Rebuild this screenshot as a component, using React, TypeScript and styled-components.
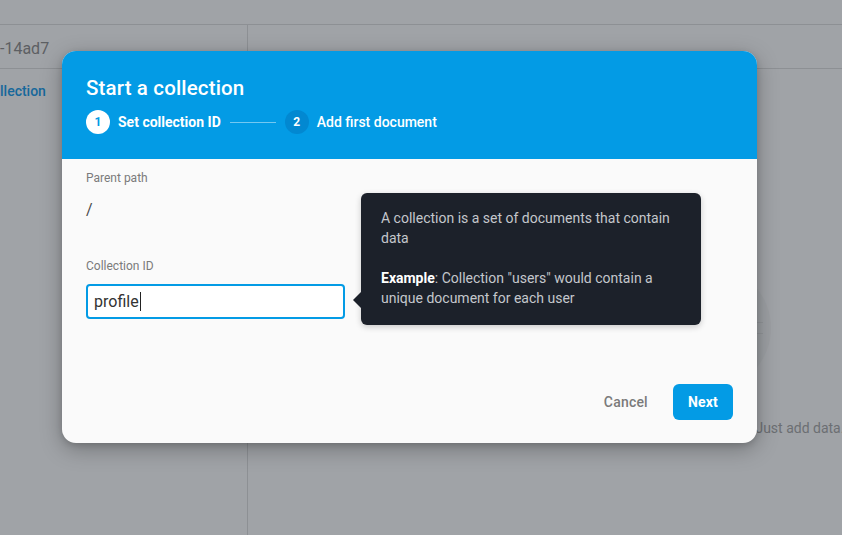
import React from "react";
import styled, { createGlobalStyle } from "styled-components";

const Global = createGlobalStyle`
  html, body { margin: 0; padding: 0; }
  body {
    width: 842px; height: 535px; overflow: hidden;
    font-family: Roboto, "Liberation Sans", Arial, sans-serif;
    background: #a0a3a7;
  }
  * { box-sizing: border-box; }
`;

const Page = styled.div`
  position: relative;
  width: 842px;
  height: 535px;
  overflow: hidden;
  background: #a0a3a7;
  display: grid;
  grid-template-rows: 25px 1fr;
`;

const TopBar = styled.div`
  border-bottom: 1px solid #8d9094;
`;

const Main = styled.div`
  display: grid;
  grid-template-columns: 248px 1fr;
`;

const Column = styled.div<{ $divider?: boolean }>`
  display: flex;
  flex-direction: column;
  border-right: ${(p) => (p.$divider ? "1px solid #8d9094" : "none")};
  min-width: 0;
  overflow: hidden;
`;

const ColHeader = styled.div`
  height: 44px;
  border-bottom: 1px solid #8d9094;
  display: flex;
  align-items: center;
  padding-top: 3px;
  font-size: 16px;
  color: #5d5f63;
  white-space: nowrap;
`;

const NavLink = styled.div`
  padding-top: 14px;
  font-size: 14px;
  font-weight: 500;
  color: #16689b;
  white-space: nowrap;
`;

const EmptyArea = styled.div`
  flex: 1;
  display: flex;
  padding-left: 310px;
  padding-top: 196px;
`;

const EmptyState = styled.div`
  flex: 0 0 300px;
  display: flex;
  flex-direction: column;
  align-items: center;
  gap: 29px;
`;

const Illustration = styled.div`
  width: 126px;
  height: 126px;
  border-radius: 50%;
  background: #9c9fa3;
  display: flex;
  flex-direction: column;
  justify-content: center;
  gap: 10px;
  padding: 0 8px;
`;

const IllLine = styled.div`
  height: 1px;
  background: #929599;
`;

const EmptyText = styled.div`
  font-size: 14px;
  color: #6c6f73;
  white-space: nowrap;
`;

const Modal = styled.div`
  position: absolute;
  left: 62px;
  top: 51px;
  width: 695px;
  height: 392px;
  border-radius: 14px;
  background: #fafafa;
  box-shadow: 0 6px 22px rgba(0, 0, 0, 0.28), 0 2px 6px rgba(0, 0, 0, 0.14);
  display: flex;
  flex-direction: column;
`;

const Header = styled.div`
  height: 108px;
  background: #039be5;
  border-radius: 14px 14px 0 0;
  padding: 23px 24px 0;
  display: flex;
  flex-direction: column;
  gap: 8px;
  color: #fff;
`;

const Title = styled.div`
  font-size: 20.5px;
  line-height: 28px;
  font-weight: 500;
  letter-spacing: 0.15px;
`;

const Steps = styled.div`
  display: flex;
  align-items: center;
`;

const StepDot = styled.div<{ $active?: boolean }>`
  width: 24px;
  height: 24px;
  border-radius: 50%;
  background: ${(p) => (p.$active ? "#ffffff" : "#0288d1")};
  color: ${(p) => (p.$active ? "#039be5" : "#ffffff")};
  font-size: 12px;
  font-weight: 700;
  display: flex;
  align-items: center;
  justify-content: center;
  margin-right: 8px;
`;

const StepLabel = styled.div<{ $active?: boolean }>`
  font-size: 14px;
  font-weight: ${(p) => (p.$active ? 700 : 500)};
  color: #fff;
`;

const StepLine = styled.div`
  width: 46px;
  height: 1px;
  background: rgba(255, 255, 255, 0.45);
  margin: 0 9px;
`;

const Body = styled.div`
  position: relative;
  flex: 1;
  display: flex;
  flex-direction: column;
  padding: 11px 24px 23px;
`;

const Label = styled.div<{ $gap?: number }>`
  font-size: 12px;
  line-height: 16px;
  color: #7b7b7b;
  margin-top: ${(p) => p.$gap ?? 0}px;
`;

const PathValue = styled.div`
  font-size: 16px;
  line-height: 24px;
  color: #4a4a4a;
  margin-top: 12px;
`;

const InputBox = styled.div`
  margin-top: 10px;
  width: 259px;
  height: 35px;
  border: 2px solid #039be5;
  border-radius: 4px;
  background: #fff;
  display: flex;
  align-items: center;
  padding: 0 6px;
  font-size: 16px;
  color: #333;
`;

const Caret = styled.span`
  display: inline-block;
  width: 1px;
  height: 19px;
  background: #222;
  margin-left: 1px;
`;

const Tooltip = styled.div`
  position: absolute;
  left: 299px;
  top: 34px;
  width: 340px;
  height: 132px;
  background: #1c212a;
  border-radius: 6px;
  padding: 15px 20px 17px;
  color: #c4c7cc;
  font-size: 14px;
  line-height: 20px;
  box-shadow: 0 2px 6px rgba(0, 0, 0, 0.2);
  &::before {
    content: "";
    position: absolute;
    left: -8px;
    top: 99px;
    border-top: 8px solid transparent;
    border-bottom: 8px solid transparent;
    border-right: 8px solid #1c212a;
  }
`;

const TipPara = styled.p`
  margin: 0 0 20px;
  &:last-child { margin-bottom: 0; }
`;

const Strong = styled.strong`
  color: #fff;
  font-weight: 700;
`;

const Footer = styled.div`
  margin-top: auto;
  display: flex;
  justify-content: flex-end;
  align-items: center;
  gap: 9px;
`;

const Button = styled.button<{ $primary?: boolean }>`
  height: 36px;
  border: none;
  border-radius: 6px;
  padding: 0 ${(p) => (p.$primary ? 15 : 16)}px;
  font-family: Roboto, "Liberation Sans", Arial, sans-serif;
  font-size: 14px;
  font-weight: ${(p) => (p.$primary ? 700 : 500)};
  background: ${(p) => (p.$primary ? "#039be5" : "transparent")};
  color: ${(p) => (p.$primary ? "#fff" : "#7a7a7a")};
  letter-spacing: 0.2px;
  cursor: pointer;
`;

export default function App() {
  return (
    <>
      <Global />
      <Page>
        <TopBar />
        <Main>
          <Column $divider>
            <ColHeader>-14ad7</ColHeader>
            <NavLink>llection</NavLink>
          </Column>
          <Column>
            <ColHeader />
            <EmptyArea>
              <EmptyState>
                <Illustration>
                  <IllLine />
                  <IllLine />
                </Illustration>
                <EmptyText>Your database is ready to go. Just add data.</EmptyText>
              </EmptyState>
            </EmptyArea>
          </Column>
        </Main>
        <Modal>
          <Header>
            <Title>Start a collection</Title>
            <Steps>
              <StepDot $active>1</StepDot>
              <StepLabel $active>Set collection ID</StepLabel>
              <StepLine />
              <StepDot>2</StepDot>
              <StepLabel>Add first document</StepLabel>
            </Steps>
          </Header>
          <Body>
            <Label>Parent path</Label>
            <PathValue>/</PathValue>
            <Label $gap={36}>Collection ID</Label>
            <InputBox>
              profile
              <Caret />
            </InputBox>
            <Tooltip>
              <TipPara>A collection is a set of documents that contain data</TipPara>
              <TipPara>
                <Strong>Example</Strong>: Collection "users" would contain a unique document for each user
              </TipPara>
            </Tooltip>
            <Footer>
              <Button>Cancel</Button>
              <Button $primary>Next</Button>
            </Footer>
          </Body>
        </Modal>
      </Page>
    </>
  );
}
